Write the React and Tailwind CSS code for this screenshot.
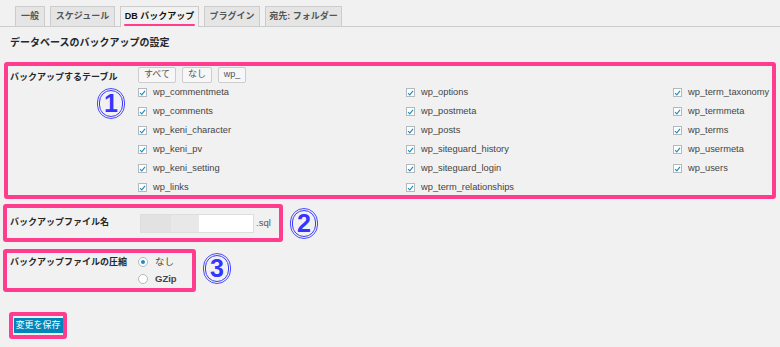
const tabs = [
  { label: "一般", w: "w-[30px]" },
  { label: "スケジュール", w: "w-[65px]" },
  { label: "DB バックアップ", w: "w-[79px]", active: true },
  { label: "プラグイン", w: "w-[56px]" },
  { label: "宛先: フォルダー", w: "w-[77px]" },
];

const tables = [
  "wp_commentmeta", "wp_options", "wp_term_taxonomy",
  "wp_comments", "wp_postmeta", "wp_termmeta",
  "wp_keni_character", "wp_posts", "wp_terms",
  "wp_keni_pv", "wp_siteguard_history", "wp_usermeta",
  "wp_keni_setting", "wp_siteguard_login", "wp_users",
  "wp_links", "wp_term_relationships",
];

function Check() {
  return (
    <span className="flex h-[9px] w-[9px] shrink-0 items-center justify-center border border-[#b4b9be] bg-white">
      <svg viewBox="0 0 10 10" className="h-[8px] w-[8px]">
        <path d="M1.5 5.2 L4 7.6 L8.6 2" fill="none" stroke="#1e8cbe" strokeWidth="1.6" />
      </svg>
    </span>
  );
}

function Radio({ on }) {
  return (
    <span className="flex h-[10px] w-[10px] shrink-0 items-center justify-center rounded-full border border-[#b4b9be] bg-white">
      {on && <span className="h-[4px] w-[4px] rounded-full bg-[#1e8cbe]" />}
    </span>
  );
}

function Num({ n }) {
  return (
    <div className="flex h-[31px] w-[28px] shrink-0 items-center justify-center rounded-full border-[1.5px] border-[#4a4aff] p-[1px]">
      <div className="flex h-full w-full items-center justify-center rounded-full border-[1.5px] border-[#3a3aff] text-[25px] font-extrabold leading-none text-[#3535ff]">
        {n}
      </div>
    </div>
  );
}

export default function App() {
  return (
    <div
      className="min-h-[347px] w-[780px] overflow-hidden bg-[#f1f1f1] text-[#23282d]"
      style={{ fontFamily: '"Liberation Sans", "Noto Sans CJK JP", sans-serif' }}
    >
      <div className="flex h-[27px] items-end gap-[5px] border-b border-[#ccc] pl-[15px]">
        {tabs.map((t) => (
          <div
            key={t.label}
            className={`relative flex items-center justify-center border border-b-0 border-[#ccc] text-[9px] font-bold ${t.w} ${
              t.active ? "-mb-px h-[21px] bg-[#f1f1f1] text-[#111]" : "h-[20px] bg-[#e5e5e5] text-[#555]"
            }`}
          >
            {t.label}
            {t.active && (
              <span className="absolute bottom-[1px] left-[3px] right-[3px] h-[2px] rounded-full bg-[#ff3c8e]" />
            )}
          </div>
        ))}
      </div>

      <h2 className="mt-[9px] pl-[10px] text-[10px] font-bold leading-[14px]">データベースのバックアップの設定</h2>

      <div className="relative ml-[4px] mt-[12px] flex h-[137px] w-[772px] rounded-[3px] border-4 border-[#ff3c8e]">
        <div className="w-[130px] shrink-0 pl-[2px] pt-[5px] text-[9px] font-bold">バックアップするテーブル</div>
        <div className="flex-1">
          <div className="flex gap-[6px] pt-[1px]">
            {[
              ["すべて", "w-[38px]"],
              ["なし", "w-[30px]"],
              ["wp_", "w-[28px]"],
            ].map(([b, w]) => (
              <button
                key={b}
                className={`flex h-[16px] items-center justify-center rounded-[2px] border border-[#ccc] bg-[#f7f7f7] text-[9px] text-[#555] ${w}`}
              >
                {b}
              </button>
            ))}
          </div>
          <div className="grid grid-cols-[268px_267px_1fr]">
            {tables.map((t) => (
              <div key={t} className="flex h-[19px] items-center gap-[6px] text-[9.3px] text-[#444]">
                <Check />
                <span>{t}</span>
              </div>
            ))}
          </div>
        </div>
        <div className="absolute left-[89px] top-[22px]">
          <Num n="1" />
        </div>
      </div>

      <div className="ml-[3px] mt-[5px] flex items-center gap-[7px]">
        <div className="flex h-[38px] w-[280px] items-center rounded-[3px] border-4 border-[#ff3c8e]">
          <div className="w-[133px] shrink-0 pl-[3px] text-[9px] font-bold">バックアップファイル名</div>
          <div className="flex h-[19px] w-[114px] overflow-hidden border border-[#ddd] bg-white">
            <span className="h-full w-[30px] bg-[#e2e2e2]" />
            <span className="h-full w-[28px] bg-[#e8e8e8]" />
          </div>
          <span className="ml-[2px] text-[9.5px] text-[#555]">.sql</span>
        </div>
        <Num n="2" />
      </div>

      <div className="ml-[3px] mt-[7px] flex items-start gap-[7px]">
        <div className="flex h-[43px] w-[193px] rounded-[3px] border-4 border-[#ff3c8e]">
          <div className="w-[131px] shrink-0 pl-[3px] pt-[3px] text-[9px] font-bold">バックアップファイルの圧縮</div>
          <div className="flex flex-col">
            <div className="flex h-[19px] items-center gap-[7px] text-[9.5px] text-[#444]">
              <Radio on />
              <span>なし</span>
            </div>
            <div className="flex h-[19px] items-center gap-[7px] text-[9.5px] font-bold text-[#444]">
              <Radio />
              <span>GZip</span>
            </div>
          </div>
        </div>
        <div className="mt-[4px]">
          <Num n="3" />
        </div>
      </div>

      <div className="ml-[9px] mt-[20px] flex h-[27px] w-[58px] items-center justify-center rounded-[3px] border-4 border-[#ff3c8e]">
        <button className="flex h-[15px] w-[49px] items-center justify-center bg-[#0085ba] text-[9px] leading-none text-white">
          変更を保存
        </button>
      </div>
    </div>
  );
}
